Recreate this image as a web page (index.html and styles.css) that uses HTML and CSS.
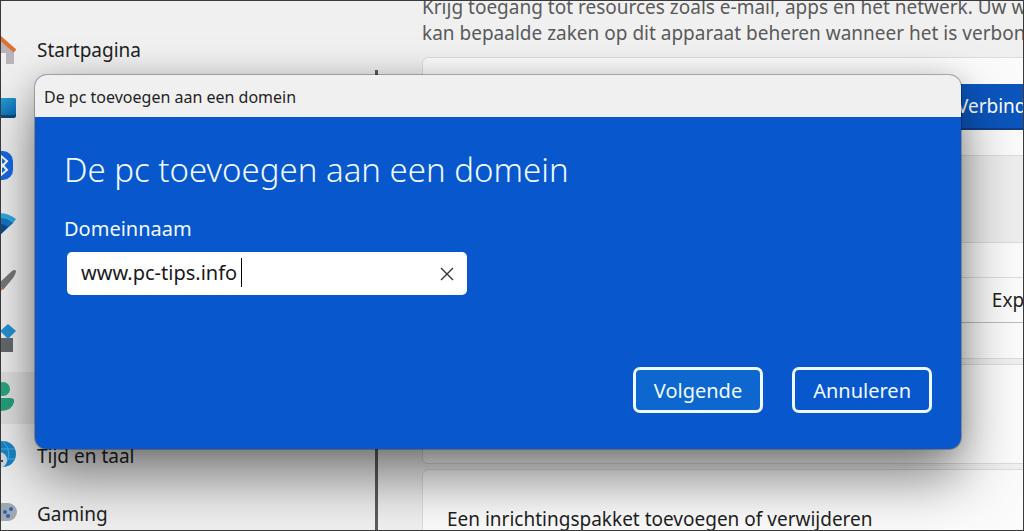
FILE: index.html
```html
<!DOCTYPE html>
<html lang="nl">
<head>
    <meta charset="UTF-8">
    <meta name="viewport" content="width=device-width, initial-scale=1.0">
    <title>De pc toevoegen aan een domein</title>
    <link rel="stylesheet" href="styles.css">
</head>
<body>
    <div class="settings">
        <nav class="sidebar">
            <a class="nav-item" href="#">
                <svg class="nav-icon" viewBox="0 0 32 32">
                    <path d="M4 15 L15 5 L29 17 V29 Q29 30 28 30 H21 V19 H13 V30 H4 Z" fill="#b9b5ba"/>
                    <path d="M1 16 L14 3 L30 17" fill="none" stroke="#e0702e" stroke-width="4" stroke-linejoin="round"/>
                </svg>
                <span>Startpagina</span>
            </a>
            <a class="nav-item" href="#" aria-label="Systeem">
                <svg class="nav-icon" viewBox="0 0 32 32">
                    <defs>
                        <linearGradient id="screen" x1="0" y1="0" x2="1" y2="1">
                            <stop offset="0" stop-color="#2bb0dc"/>
                            <stop offset="1" stop-color="#0d68b4"/>
                        </linearGradient>
                    </defs>
                    <rect x="1" y="6" width="30" height="20" rx="2" fill="#0b4a78"/>
                    <rect x="1" y="6" width="30" height="17" rx="2" fill="url(#screen)"/>
                </svg>
            </a>
            <a class="nav-item" href="#" aria-label="Bluetooth en apparaten">
                <svg class="nav-icon" viewBox="0 0 32 32">
                    <rect x="2" y="1" width="26" height="29" rx="10" fill="#1769e6"/>
                    <path d="M13 10 L22 20 L16 25 V6 L22 11 L13 21" fill="none" stroke="#fff" stroke-width="2"/>
                </svg>
            </a>
            <a class="nav-item" href="#" aria-label="Netwerk en internet">
                <svg class="nav-icon" viewBox="0 0 32 32">
                    <path d="M1 12 Q15 -1 31 11 L28 15 L16 26 Z" fill="#2ca9df"/>
                    <path d="M4 15 Q15 5 28 15 L16 26 Z" fill="#1574c4"/>
                    <path d="M9 19 Q15 13 23 19 L16 26 Z" fill="#0d4c91"/>
                </svg>
            </a>
            <a class="nav-item" href="#" aria-label="Persoonlijke instellingen">
                <svg class="nav-icon" viewBox="0 0 32 32">
                    <path d="M14 17 L27 5 Q30 3 31 5 Q31 7 28 12 L18 24 Z" fill="#77777a"/>
                    <path d="M3 27 Q8 24 11 19 L18 22 Q15 29 3 27 Z" fill="#c66a35"/>
                </svg>
            </a>
            <a class="nav-item" href="#" aria-label="Apps">
                <svg class="nav-icon" viewBox="0 0 32 32">
                    <path d="M3 14 H28 V28 H3 Z" fill="#66696d"/>
                    <path d="M23 0 L31 7 L23 15 L15 7 Z" fill="#2493d7"/>
                </svg>
            </a>
            <a class="nav-item active" href="#" aria-label="Accounts">
                <svg class="nav-icon" viewBox="0 0 32 32">
                    <circle cx="18" cy="7" r="7" fill="#2aa583"/>
                    <path d="M5 16 H25 Q30 16 29 20 Q27 29 15 29 Q5 29 5 21 Z" fill="#24a37c"/>
                </svg>
            </a>
            <a class="nav-item" href="#">
                <svg class="nav-icon" viewBox="0 0 32 32">
                    <circle cx="18" cy="14" r="13" fill="#1787c9"/>
                    <path d="M18 1 Q30 14 18 27 M5 9 H30 M5 19 H30" fill="none" stroke="#49b4e4" stroke-width="1"/>
                    <circle cx="14" cy="20" r="8" fill="#d5dade"/>
                    <path d="M14 15 V21 H18" fill="none" stroke="#34495c" stroke-width="2"/>
                </svg>
                <span>Tijd en taal</span>
            </a>
            <a class="nav-item" href="#">
                <svg class="nav-icon" viewBox="0 0 32 32">
                    <rect x="0" y="5" width="32" height="18" rx="9" fill="#a3a9b2"/>
                    <circle cx="26" cy="11" r="2" fill="#2d62b5"/>
                    <circle cx="20" cy="14" r="2" fill="#2d62b5"/>
                    <circle cx="23" cy="18" r="2" fill="#2d62b5"/>
                </svg>
                <span>Gaming</span>
            </a>
        </nav>

        <main class="content">
            <p class="intro">
                Krijg toegang tot resources zoals e-mail, apps en het netwerk. Uw werk<br>
                kan bepaalde zaken op dit apparaat beheren wanneer het is verbonden
            </p>

            <section class="card">
                <div class="row row-connect">
                    <button class="connect-button" type="button">Verbinden</button>
                </div>
                <div class="row row-account"></div>
                <div class="row row-small"></div>
                <div class="row row-export">
                    <a class="export-link" href="#">Exporteren</a>
                </div>
                <div class="row row-small"></div>
            </section>

            <section class="card card-empty"></section>

            <section class="card card-package">
                <h3>Een inrichtingspakket toevoegen of verwijderen</h3>
            </section>
        </main>
    </div>

    <dialog class="dialog" open aria-labelledby="dialog-title">
        <header class="title-bar">De pc toevoegen aan een domein</header>
        <form class="dialog-body">
            <h1 id="dialog-title">De pc toevoegen aan een domein</h1>
            <label for="domain">Domeinnaam</label>
            <div class="field">
                <input id="domain" type="text" value="www.pc-tips.info" spellcheck="false">
                <span class="caret"></span>
                <button class="clear-button" type="button" aria-label="Wissen">
                    <svg viewBox="0 0 14 14">
                        <path d="M1 1 L13 13 M13 1 L1 13" fill="none" stroke="#333" stroke-width="1.4"/>
                    </svg>
                </button>
            </div>
            <div class="actions">
                <button class="action primary" type="button">Volgende</button>
                <button class="action" type="button">Annuleren</button>
            </div>
        </form>
    </dialog>
</body>
</html>
```
FILE: styles.css
```css
* {
    box-sizing: border-box;
    margin: 0;
    padding: 0;
}

body {
    height: 100vh;
    overflow: hidden;
    position: relative;
    border: 1px solid #3a3a3a;
    background: #f0f0f0;
    color: #1f1f1f;
    font-family: "Noto Sans", "Open Sans", sans-serif;
    font-size: 19px;
}

button,
input {
    font: inherit;
}

.settings {
    display: flex;
    height: 100%;
    overflow: hidden;
}

/* Left navigation */
.sidebar {
    display: flex;
    flex-direction: column;
    flex: 0 0 377px;
    gap: 6px;
    padding-top: 23px;
    border-right: 3px solid #5c5c5c;
    border-image: linear-gradient(transparent 70px, #5c5c5c 70px) 1;
}

.nav-item {
    display: flex;
    align-items: center;
    flex: 0 0 52px;
    gap: 20px;
    color: inherit;
    text-decoration: none;
}

.nav-item.active {
    background: #e2e2e2;
}

.nav-icon {
    width: 32px;
    height: 32px;
    margin-left: -16px;
}

/* Right pane */
.content {
    flex: 1;
    min-width: 0;
    margin: -7px -120px 0 44px;
}

.intro {
    margin-bottom: 11px;
    color: #5a5a5a;
    line-height: 26px;
    white-space: nowrap;
}

.card {
    margin-bottom: 5px;
    border: 1px solid #dcdcdc;
    border-radius: 6px;
    background: #fbfbfb;
    overflow: hidden;
}

.row {
    display: flex;
    align-items: center;
    justify-content: flex-end;
    padding-right: 51px;
    border-bottom: 1px solid #dcdcdc;
}

.row:last-child {
    border-bottom: none;
}

.row-connect {
    height: 98px;
}

.row-account {
    height: 87px;
    background: #eee;
}

.row-small {
    height: 35px;
}

.row-export {
    height: 45px;
    border-color: #bbb;
}

.connect-button {
    height: 46px;
    padding: 0 42px;
    border: none;
    border-bottom: 2px solid #123e85;
    background: #0b55bd;
    color: #fff;
}

.export-link {
    color: #1f1f1f;
    text-decoration: none;
}

.card-empty {
    height: 100px;
}

.card-package {
    height: 100px;
    padding: 36px 24px;
}

.card-package h3 {
    font-size: 19px;
    font-weight: 400;
    line-height: 26px;
}

/* Dialog */
.dialog {
    position: absolute;
    top: 74px;
    left: 34px;
    width: auto;
    right: 62px;
    border: none;
    border-radius: 12px;
    background: #0957cc;
    color: #effaff;
    font-size: 20px;
    overflow: hidden;
    box-shadow: 0 0 0 1px rgba(0, 0, 0, 0.25), 0 28px 56px rgba(0, 0, 0, 0.5), 0 0 24px rgba(0, 0, 0, 0.12);
}

.title-bar {
    height: 42px;
    padding-left: 9px;
    background: #f0f0f0;
    color: #1f1f1f;
    font-size: 16px;
    line-height: 44px;
}

.dialog-body {
    display: flex;
    flex-direction: column;
    padding: 29px 29px 36px;
}

.dialog-body h1 {
    font-size: 33px;
    font-weight: 300;
    line-height: 48px;
}

.dialog-body label {
    margin-top: 22px;
    line-height: 26px;
}

.field {
    position: relative;
    display: flex;
    width: 400px;
    max-width: 100%;
    height: 43px;
    margin: 10px 0 0 3px;
    border-radius: 5px;
    background: #fff;
}

.field input {
    flex: 1;
    min-width: 0;
    padding: 0 0 2px 14px;
    border: none;
    outline: none;
    background: none;
    color: #1a1a1a;
}

.caret {
    position: absolute;
    top: 6px;
    left: 174px;
    width: 1px;
    height: 29px;
    background: #000;
}

.clear-button {
    width: 40px;
    border: none;
    background: none;
}

.clear-button svg {
    width: 14px;
    height: 14px;
}

.actions {
    display: flex;
    justify-content: flex-end;
    gap: 29px;
    margin-top: 72px;
}

.action {
    height: 46px;
    padding: 0 18px;
    border: 3px solid #effaff;
    border-radius: 7px;
    background: #0957cc;
    color: #effaff;
}

.action.primary {
    background: #0e66cf;
}
```
